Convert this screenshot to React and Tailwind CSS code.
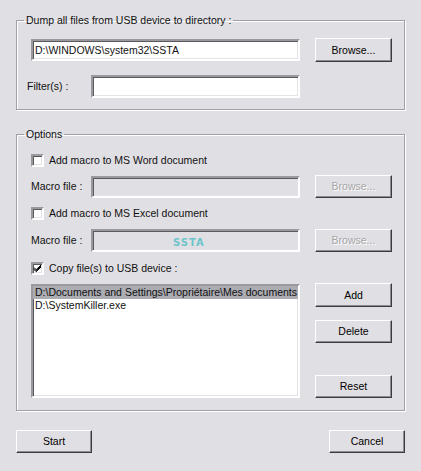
import React from "react";

const sunken =
  "border-2 border-t-[#9a9a9e] border-l-[#9a9a9e] border-b-white border-r-white shadow-[inset_1px_1px_0_#5a5a5e,inset_-1px_-1px_0_#e3e2e6]";

function Btn({ children, disabled, className = "" }) {
  return (
    <div
      className={
        "flex items-center justify-center border border-t-white border-l-white border-b-[#3c3c40] border-r-[#3c3c40] shadow-[inset_-1px_-1px_0_#8e8e92] bg-[#e0dfe3] " +
        (disabled ? "text-[#a5a5a8] [text-shadow:1px_1px_0_#fff] " : "text-black ") +
        className
      }
    >
      {children}
    </div>
  );
}

function Check({ checked }) {
  return (
    <div className={"w-[13px] h-[13px] bg-white shrink-0 " + sunken}>
      {checked && (
        <svg width="9" height="9" viewBox="0 0 9 9" className="block">
          <path d="M1 3.5 L3.2 5.7 L8 1 M1 4.5 L3.2 6.7 L8 2 M1 5.5 L3.2 7.7 L8 3" stroke="#000" strokeWidth="1" fill="none" />
        </svg>
      )}
    </div>
  );
}

function Group({ title, className = "", children }) {
  return (
    <fieldset
      className={
        "w-[389px] border border-[#a0a0a4] shadow-[inset_1px_1px_0_#fff,1px_1px_0_#fff] pl-[14px] pr-[12px] " +
        className
      }
    >
      <legend className="ml-[-7px] px-[2px] leading-[13px] h-[13px]">{title}</legend>
      {children}
    </fieldset>
  );
}

export default function App() {
  return (
    <div className="w-[421px] h-[471px] overflow-hidden bg-[#e0dfe3] font-['Liberation_Sans',Arial,sans-serif] text-[10.5px] leading-[13px] text-[#111] pl-4 pt-[14px]">
      <Group title="Dump all files from USB device to directory :" className="pb-[11px]">
        <div className="mt-[11px] flex items-center h-[24px]">
          <div className={"w-[269px] h-[22px] bg-white flex items-center px-[2px] " + sunken}>
            D:\WINDOWS\system32\SSTA
          </div>
          <Btn className="ml-[15px] w-[77px] h-[24px]">Browse...</Btn>
        </div>
        <div className="mt-[13px] flex items-center h-[23px]">
          <div className="ml-[-4px] w-[64px]">Filter(s) :</div>
          <div className={"w-[209px] h-[23px] bg-white " + sunken}></div>
        </div>
      </Group>

      <Group title="Options" className="mt-[18px] pb-[12px]">
        <div className="mt-[13px] flex items-center h-[13px]">
          <Check />
          <span className="ml-[5px]">Add macro to MS Word document</span>
        </div>
        <div className="mt-[8px] flex items-center h-[23px]">
          <div className="w-[60px]">Macro file :</div>
          <div className={"w-[209px] h-[22px] " + sunken}></div>
          <Btn disabled className="ml-[15px] w-[77px] h-[23px]">Browse...</Btn>
        </div>
        <div className="mt-[9px] flex items-center h-[13px]">
          <Check />
          <span className="ml-[5px]">Add macro to MS Excel document</span>
        </div>
        <div className="mt-[9px] flex items-center h-[23px]">
          <div className="w-[60px]">Macro file :</div>
          <div className={"w-[209px] h-[23px] flex items-end pb-[1px] " + sunken}>
            <span className="ml-[80px] font-['DejaVu_Sans',sans-serif] font-bold text-[10px] tracking-[1px] text-[#6fc4cc]">
              SSTA
            </span>
          </div>
          <Btn disabled className="ml-[15px] w-[77px] h-[23px]">Browse...</Btn>
        </div>
        <div className="mt-[10px] flex items-center h-[13px]">
          <Check checked />
          <span className="ml-[5px]">Copy file(s) to USB device :</span>
        </div>
        <div className="mt-[8px] flex items-start">
          <div className={"mt-[1px] w-[269px] h-[114px] bg-white overflow-hidden " + sunken}>
            <div className="h-[13px] bg-[#acacb3] px-[2px] whitespace-nowrap overflow-hidden">
              D:\Documents and Settings\Propriétaire\Mes documents
            </div>
            <div className="h-[13px] px-[2px] whitespace-nowrap">D:\SystemKiller.exe</div>
          </div>
          <div className="ml-[15px] flex flex-col">
            <Btn className="w-[77px] h-[24px]">Add</Btn>
            <Btn className="mt-[13px] w-[77px] h-[23px]">Delete</Btn>
            <Btn className="mt-[32px] w-[77px] h-[23px]">Reset</Btn>
          </div>
        </div>
      </Group>

      <div className="mt-[19px] w-[389px] flex justify-between">
        <Btn className="w-[76px] h-[23px]">Start</Btn>
        <Btn className="w-[76px] h-[23px]">Cancel</Btn>
      </div>
    </div>
  );
}
